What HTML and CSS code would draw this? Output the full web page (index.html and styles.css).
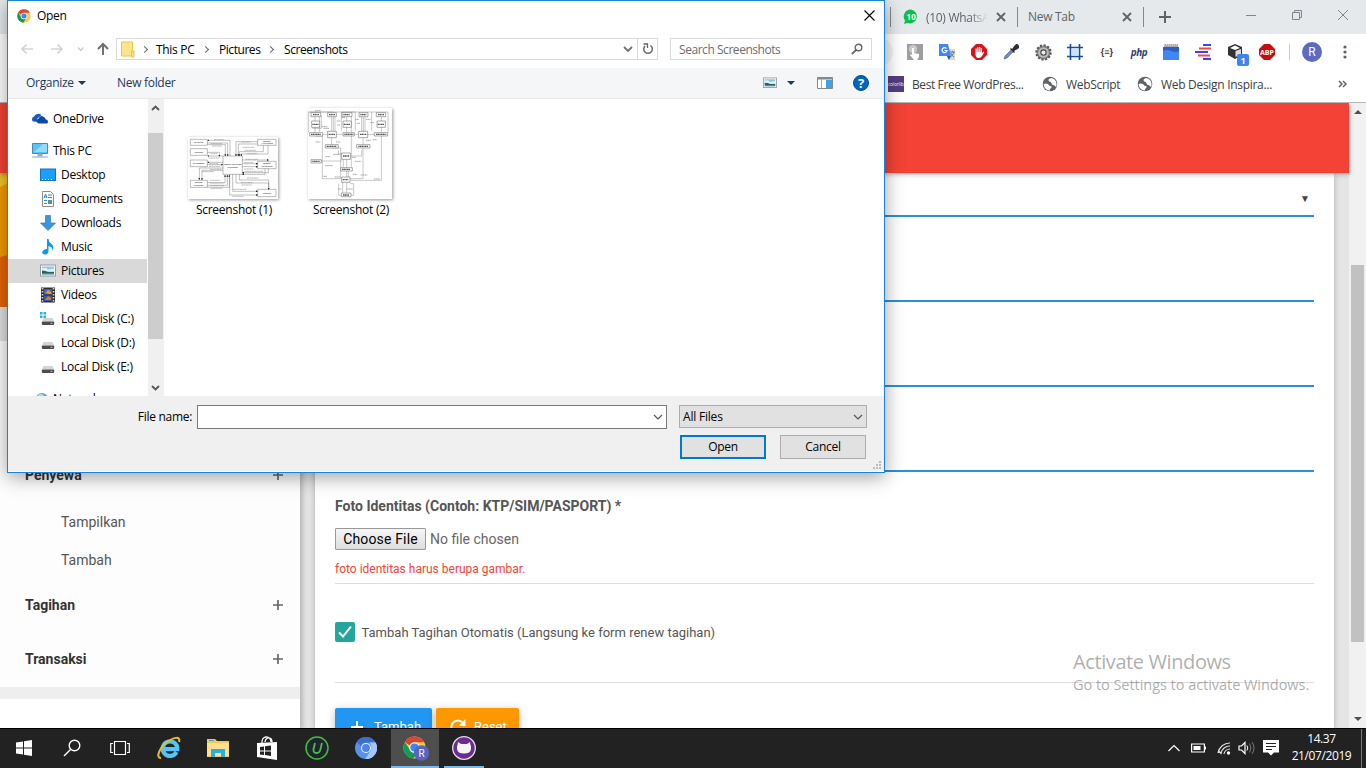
FILE: index.html
```html
<!DOCTYPE html>
<html lang="id">
<head>
<meta charset="utf-8">
<title>Tambah Penyewa</title>
<link rel="stylesheet" href="styles.css">
</head>
<body>
<svg class="defs" width="0" height="0">
  <symbol id="x" viewBox="0 0 10 10"><path d="M1 1l8 8M9 1l-8 8" stroke="currentColor" stroke-width="1.800" fill="none"/></symbol>
  <symbol id="plus" viewBox="0 0 12 12"><path d="M6 0v12M0 6h12" stroke="currentColor" stroke-width="2" fill="none"/></symbol>
  <symbol id="down" viewBox="0 0 10 10"><path d="M1 3l4 4 4-4" stroke="#555" stroke-width="1.200" fill="none"/></symbol>
  <symbol id="globe" viewBox="0 0 24 24"><circle cx="12" cy="12" r="11" fill="#5f6368"/><path d="M2.500 12q3-1.500 6 0c2 1 1.500 2.500 4 3s2.500 2 1 3-2 4-2 4C6 21 2.500 17 2.500 12zM14 3c-3 1-5 2-4 4s3 1 4 3 0 3 3 3.500 2 3 4.500 2.500C23 10 20 4 14 3z" fill="#fff"/></symbol>
  <symbol id="disk" viewBox="0 0 16 12"><path d="M3 3h10l2 4H1z" fill="#d2d4d6"/><rect x="1" y="7" width="14" height="4" rx="1" fill="#4a4c4e"/><rect x="11" y="8.500" width="2" height="1.500" fill="#5fe36a"/></symbol>
  <symbol id="photo" viewBox="0 0 16 13"><rect x=".5" y="1" width="15" height="11" fill="#fff" stroke="#9a9a9a"/><rect x="2" y="2.500" width="12" height="8" fill="#8cc5ee"/><path d="M2 4.500q4-2 6 1l6-1v3H2z" fill="#e4f1f7"/><path d="M2 6.500q4 0 6 1.500h6v1H2z" fill="#2e6350"/><path d="M2 9h12v1.500H2z" fill="#3e8ac2"/></symbol>
  <symbol id="chrome" viewBox="0 0 24 24"><circle cx="12" cy="12" r="11.500" fill="#ffcd40"/><path d="M2 6.200A11.500 11.500 0 0 1 22 6.500H12a5.500 5.500 0 0 0-5 3.500z" fill="#db4437"/><path d="M2 6.200A11.500 11.500 0 0 0 11 23.500l5-8.500a5 5 0 0 1-9-1z" fill="#0f9d58"/><circle cx="12" cy="12" r="5.500" fill="#f1f1f1"/><circle cx="12" cy="12" r="4.300" fill="#4285f4"/></symbol>
  <marker id="tip" viewBox="0 0 6 6" refX="4" refY="3" markerWidth="6" markerHeight="6" markerUnits="userSpaceOnUse" orient="auto"><path d="M0 0l6 3-6 3z" fill="#222"/></marker>
</svg>

<div class="desktop">
  <div class="browser">
    <div class="tabstrip">
      <i class="tabsep"></i>
      <svg class="wa" width="16" height="16" viewBox="0 0 16 16"><path d="M8 .5a7 7 0 1 1-3.500 13.500L1 15l1-3.500A7 7 0 0 1 8 .5z" fill="#0cbf4c"/><text x="8.200" y="10.800" text-anchor="middle" class="wa-n">10</text></svg>
      <span class="tab-title wa-title ui">(10) WhatsA</span>
      <svg class="tabx" width="10" height="10"><use href="#x"/></svg>
      <i class="tabsep"></i>
      <span class="tab-title nt-title ui">New Tab</span>
      <svg class="tabx" width="10" height="10"><use href="#x"/></svg>
      <i class="tabsep"></i>
      <svg class="newtab" width="12" height="12"><use href="#plus"/></svg>
      <div class="winbtns">
        <svg width="12" height="12"><path d="M1 6.500h10" stroke="#80868b"/></svg>
        <svg width="12" height="12" viewBox="0 0 12 12"><path d="M1.500 3.500h7v7h-7zM3.500 3.500v-2h7v7h-2" fill="none" stroke="#80868b"/></svg>
        <svg width="12" height="12" viewBox="0 0 12 12"><path d="M1 1l10 10M11 1L1 11" stroke="#80868b"/></svg>
      </div>
    </div>
    <div class="toolbar">
      <span class="omni-end"></span>
      <div class="exts">
        <span><svg width="16" height="16"><rect width="16" height="16" fill="#9e9e9e"/><circle cx="6" cy="5" r="4" fill="#c9c9c9"/><path d="M5 4h2v5l5 1v3l-2 3H7l-4-5 1-1 1 1z" fill="#fff"/></svg></span>
        <span><svg width="16" height="16"><path d="M6 5h10v11H9z" fill="#d5d9de"/><path d="M0 0h9l3 12H0z" fill="#4285f4"/><path d="M8 12h4l-2 4z" fill="#2a56c6"/><path d="M7.500 4.500a2.500 2.500 0 1 0 .5 2H5.500" stroke="#fff" stroke-width="1.200" fill="none"/><path d="M11 8h5M13.500 7v1M15 8q-1 4-4 5M12 9q1 3 3 4" stroke="#607d8b" fill="none"/></svg></span>
        <span><svg width="16" height="16"><path d="M5 0h6l5 5v6l-5 5H5l-5-5V5z" fill="#d9131b"/><path d="M4.500 8V4.500h1.200V8h.5V3.200h1.300V8H8V3h1.300v5h.5V4H11v5l1.500-1.500.8.800L11 12q-1 2-3.500 2T4.500 11z" fill="#fff"/></svg></span>
        <span><svg width="16" height="16"><path d="M1 15l1-3 6-6 2 2-6 6z" fill="#5c8de0" stroke="#777" stroke-width=".8"/><path d="M7 5l1-1 1 1 3-4q2-2 3.500 0t0 3.500L11 7l1 1-1 1z" fill="#2b2d38"/></svg></span>
        <span><svg width="17" height="17" viewBox="-8 -8 16 16"><circle r="6.700" fill="#999" stroke="#555" stroke-width="2" stroke-dasharray="2 1.500"/><circle r="5.500" fill="#bbb" stroke="#777"/><circle r="2.500" fill="#eee" stroke="#444"/></svg></span>
        <span><svg width="16" height="16"><path d="M3.500 0v16M12.500 0v16M0 3.500h16M0 12.500h16" stroke="#164c98" stroke-width="1.600"/><rect x="4.500" y="4.500" width="7" height="7" fill="#cde2f7"/></svg></span>
        <span class="json">{≡}</span>
        <span class="php">php</span>
        <span><svg width="16" height="16"><path d="M1 0h14v4H1z" fill="#aaa"/><path d="M1 1h14" stroke="#eee" stroke-dasharray="1 1"/><path d="M0 3h16v13H0z" fill="#4285f4"/><path d="M0 3h16v4q-4 2-8 0T0 7z" fill="#2860c4"/></svg></span>
        <span><svg width="16" height="16"><path d="M8 1h8M0 8h13M8 15h8" stroke="#3c43f5" stroke-width="2"/><path d="M4 4.500h12M3 11.500h12" stroke="#ff4545" stroke-width="2"/></svg></span>
        <span><svg class="cube" width="22" height="22" viewBox="0 0 22 22"><path d="M8 0l7 3v8l-7 4-7-4V3z" fill="#333"/><path d="M8 1.500L13 4 8 6 3 4z" fill="#fff"/><path d="M8.500 7L14 5v5l-5.500 3z" fill="#ddd"/><rect x="10" y="10" width="12" height="12" rx="2" fill="#3f84f2"/><text x="16" y="19.500" text-anchor="middle" class="badge-n">1</text></svg></span>
        <span><svg width="16" height="16"><path d="M5 0h6l5 5v6l-5 5H5l-5-5V5z" fill="#c70d0d"/><text x="8" y="10.800" text-anchor="middle" class="abp">ABP</text></svg></span>
      </div>
      <i class="extsep"></i>
      <span class="avatar">R</span>
      <svg class="dots" width="4" height="14"><circle cx="2" cy="2" r="1.600"/><circle cx="2" cy="7" r="1.600"/><circle cx="2" cy="12" r="1.600"/></svg>
    </div>
    <div class="bookmarks ui">
      <svg width="16" height="16"><rect width="16" height="16" fill="#563d82"/><text x="8" y="10" text-anchor="middle" class="clb">colorlib</text></svg>
      <span class="bm1">Best Free WordPres...</span>
      <svg width="16" height="16"><use href="#globe"/></svg>
      <span class="bm2">WebScript</span>
      <svg width="16" height="16"><use href="#globe"/></svg>
      <span class="bm3">Web Design Inspira...</span>
      <svg class="more" width="9" height="8"><path d="M1 1l3 3-3 3M5 1l3 3-3 3" fill="none" stroke="#5f6368" stroke-width="1.500"/></svg>
    </div>
    <div class="viewport">
      <div class="page">
        <div class="navbar"></div>
        <div class="columns">
          <aside class="sidebar">
            <svg class="cover" width="300" height="134"><rect width="300" height="134" fill="#e66500"/><path d="M0 20L300 -80V0L0 84z" fill="#f59b00"/><path d="M0 0h60L0 22z" fill="#f4c32c"/><path d="M0 14l8-4v48L0 75z" fill="#f59b00"/></svg>
            <div class="userbar"></div>
            <nav class="menu">
              <div class="head"><b>Penyewa</b><svg width="10" height="10"><use href="#plus"/></svg></div>
              <a class="sub">Tampilkan</a>
              <a class="sub">Tambah</a>
              <div class="head"><b>Tagihan</b><svg width="10" height="10"><use href="#plus"/></svg></div>
              <div class="head"><b>Transaksi</b><svg width="10" height="10"><use href="#plus"/></svg></div>
            </nav>
            <div class="legal"></div>
          </aside>
          <main class="card">
            <div class="field select"><span>▼</span></div>
            <div class="field"></div>
            <div class="field"></div>
            <div class="field"></div>
            <div class="upload">
              <b class="lbl">Foto Identitas (Contoh: KTP/SIM/PASPORT) *</b>
              <div class="file"><button>Choose File</button><span>No file chosen</span></div>
              <p class="err">foto identitas harus berupa gambar.</p>
            </div>
            <div class="check"><span class="box"><svg width="20" height="20"><path d="M4 10.500l4 4 8-10" fill="none" stroke="#fff" stroke-width="2"/></svg></span>Tambah Tagihan Otomatis (Langsung ke form renew tagihan)</div>
            <div class="actions">
              <span class="btn add"><svg width="12" height="12"><use href="#plus"/></svg>Tambah</span>
              <span class="btn reset"><svg width="16" height="16"><path d="M13 4A6.500 6.500 0 1 0 14.300 9" fill="none" stroke="#fff" stroke-width="2"/><path d="M15.500 0v7h-7z" fill="#fff"/></svg>Reset</span>
            </div>
          </main>
        </div>
      </div>
      <div class="vscroll"><i class="up"></i><i class="thumb"></i><i class="dn"></i></div>
    </div>
  </div>

  <div class="taskbar">
    <div class="apps">
      <span class="n"><svg width="16" height="16"><path d="M0 2.500l7-1V7.500H0zM8 1.300L16 0v7.500H8zM0 8.500h7v6l-7-1zM8 8.500h8V16l-8-1.300z" fill="#fff"/></svg></span>
      <span class="n"><svg width="18" height="18"><circle cx="11.500" cy="6.500" r="5.300" fill="none" stroke="#fff" stroke-width="1.400"/><path d="M7.500 10.500L1 17" stroke="#fff" stroke-width="1.500"/></svg></span>
      <span class="n"><svg width="20" height="16"><path d="M4.500 1.500h11v13h-11zM3 3.500H.7v9H3M17 3.500h2.300v9H17" fill="none" stroke="#fff" stroke-width="1.200"/></svg></span>
      <span><svg width="24" height="24" viewBox="0 0 24 24"><path d="M19.500 16A7.300 7.300 0 1 1 20.300 13.200H7" fill="none" stroke="#53c4f6" stroke-width="4.200"/><path d="M4 22C-2 22 3 11 10 6S24 0 22 6" fill="none" stroke="#f1bd1c" stroke-width="2"/></svg></span>
      <span><svg width="22" height="20"><path d="M0 1h8l2 2h12v16H0z" fill="#f2c65a"/><path d="M0 5h22v13H0z" fill="#fbe08e"/><path d="M4 11h14v8h-4v-4H8v4H4z" fill="#29aee6"/><path d="M2 2.500h5" stroke="#36a9d8"/></svg></span>
      <span><svg width="22" height="24"><path d="M6 8C5-1 14-1 15 6M9 6c1-6 7-5 7 0" fill="none" stroke="#fff" stroke-width="1.300"/><path d="M1 7l20-1v18L1 21z" fill="#fff"/><path d="M4 11l4-.5v4H4zM9 10.300l6-.8v5H9zM4 15.500h4V19l-4-.5zM9 15.500h6V20l-6-1z" fill="#222"/></svg></span>
      <span><svg width="24" height="24"><circle cx="12" cy="12" r="11" fill="#1f2430" stroke="#43bd39" stroke-width="1.500"/><path d="M10 7L8.500 13q-.5 4 3 4t4-4L17 7" fill="none" stroke="#4dc13f" stroke-width="1.800"/></svg></span>
      <span><svg width="22" height="22" viewBox="0 0 24 24"><circle cx="12" cy="12" r="12" fill="#5b8fee"/><path d="M2 5.500A12 12 0 0 1 22.500 6H12a6 6 0 0 0-5.500 4z" fill="#3d6dcb"/><path d="M22.500 6A12 12 0 0 1 11 24l6-9q2-5-1-9z" fill="#a5c6fb"/><circle cx="12" cy="12" r="5.500" fill="#e9f1fd"/><circle cx="12" cy="12" r="4.300" fill="#4c84e6"/></svg></span>
      <span class="active"><svg width="26" height="26" viewBox="0 0 26 26"><use href="#chrome" x="0" y="1" width="23" height="23"/><circle cx="18.500" cy="18" r="7.700" fill="#5765bd"/><text x="18.500" y="21.500" text-anchor="middle" class="r-n">R</text></svg></span>
      <span class="open"><svg width="24" height="24"><circle cx="12" cy="12" r="11.300" fill="#6c2b91" stroke="#e5dcec" stroke-width="1.300"/><path d="M6 6l3 2h6l3-2 .5 3q.8 1 .5 4-.5 4.500-7 4.500T5 13q-.3-3 .5-4z" fill="#f5f5f5"/></svg></span>
    </div>
    <div class="tray">
      <svg width="14" height="8"><path d="M1.500 7L7 1.500 12.500 7" fill="none" stroke="#fff" stroke-width="1.200"/></svg>
      <svg width="15" height="10"><path d="M.6 1h12.800v8H.6z" fill="none" stroke="#fff" stroke-width="1.200"/><path d="M2.500 3h7v4h-7zM13.500 3.500H15v3h-1.500z" fill="#fff"/></svg>
      <svg width="14" height="14"><path d="M1 12A12 12 0 0 1 13 2M4 12.500A9 9 0 0 1 13 5M7 13a6 6 0 0 1 6-5M1.500 9.500l3 3.500" fill="none" stroke="#ddd" stroke-width="1.200"/><circle cx="11.500" cy="12" r="1.700" fill="#fff"/></svg>
      <svg width="17" height="14"><path d="M1 5h2.500L7 1.500v11L3.500 9H1z" fill="none" stroke="#fff" stroke-width="1.200"/><path d="M9 4.500q1.500 2.500 0 5" fill="none" stroke="#fff"/><path d="M11.500 2.500q3 4.500 0 9M14 1q4 6 0 12" fill="none" stroke="#777"/></svg>
      <svg width="16" height="16"><path d="M0 0h16v12.500h-5L8 15.500l-3-3H0z" fill="#fff"/><path d="M3 3.500h10M3 6.500h10M3 9.500h6" stroke="#222"/></svg>
      <div class="clock ui"><span>14.37</span><span>21/07/2019</span></div>
      <i class="peek"></i>
    </div>
  </div>

  <div class="watermark"><span class="w1">Activate Windows</span><span class="w2">Go to Settings to activate Windows.</span></div>

  <section class="dialog ui">
    <header class="title"><svg width="14" height="14"><use href="#chrome"/></svg><span>Open</span><svg class="close" width="11" height="11"><path d="M.5.5l10 10M10.500.5l-10 10" stroke="#000" stroke-width="1.100"/></svg></header>
    <div class="nav">
      <svg class="arrows" width="97" height="16" fill="none"><path d="M14 8H3m4.500-4.500L3 8l4.500 4.500M32 8h11m-4.500-4.500L43 8l-4.500 4.500" stroke="#d4d4d4" stroke-width="1.700"/><path d="M59 6.500l2.700 3 2.700-3" stroke="#ccc" stroke-width="1.300"/><path d="M84 14V3m-5 5l5-5 5 5" stroke="#707070" stroke-width="2"/></svg>
      <div class="address">
        <svg width="14" height="17"><path d="M.5 1h11v14H.5z" fill="#ffe48f" stroke="#edc64e"/><path d="M10.500 10h2.500v6h-2.500z" fill="#fbe08b" stroke="#e8b938" stroke-width=".8"/></svg>
        <em></em><span class="c1">This PC</span><em></em><span class="c2">Pictures</span><em></em><span class="c3">Screenshots</span>
        <svg class="hist" width="10" height="10"><path d="M1 3l4 4 4-4" fill="none" stroke="#707070" stroke-width="1.800"/></svg>
        <b class="refresh"><svg width="12" height="12"><path d="M8.500 2.500A4.300 4.300 0 1 1 3 3" fill="none" stroke="#666" stroke-width="1.500"/><path d="M1.500 1h4v4" fill="none" stroke="#666" stroke-width="1.300"/></svg></b>
      </div>
      <div class="search"><span>Search Screenshots</span><svg width="12" height="12"><circle cx="7.500" cy="4.500" r="3.300" fill="none" stroke="#666" stroke-width="1.400"/><path d="M5 7L.8 11.200" stroke="#666" stroke-width="1.800"/></svg></div>
    </div>
    <div class="cmd">
      <span class="org">Organize</span><i class="tri"></i><span class="nf">New folder</span>
      <svg class="view" width="14" height="11.500"><use href="#photo"/></svg><i class="tri"></i>
      <svg class="pane" width="16" height="12"><path d="M.5.500h15v11H.5z" fill="#fff" stroke="#888"/><path d="M.5 1.500h15" stroke="#888" stroke-width="2"/><path d="M4.500 2v9" stroke="#aaa"/><path d="M9 3h6v8H9z" fill="#3da3e8"/></svg>
      <svg width="16" height="16"><circle cx="8" cy="8" r="7.500" fill="#0067c0" stroke="#0b4c8b"/><text x="8" y="12.500" text-anchor="middle" class="q">?</text></svg>
    </div>
    <div class="body">
      <div class="tree">
        <div class="row top"><svg width="16" height="11"><path d="M1 8.500a3 3 0 0 1 1-5Q5-1 9.500 2L6 5q-2 2 0 4z" fill="#1a5bbf"/><path d="M6.500 10.500a2.500 2.500 0 0 1 0-4.800q1-3.500 4-2.500t3 3q2.500.3 2.500 2.500t-2 1.800z" fill="#0d47a8"/></svg>OneDrive</div>
        <div class="row top pc"><svg width="16" height="15"><path d="M.5.500h15v10H.5z" fill="#5ac2fb" stroke="#458bb5"/><path d="M2 9L11 1h4v8z" fill="#92dcff"/><path d="M6 11h4v2H6zM0 14h16" fill="#b1c4d2" stroke="#8ba4b7"/></svg>This PC</div>
        <div class="row"><svg width="16" height="13"><rect x=".5" y="1" width="15" height="11.500" fill="#1a9fff" stroke="#1274bd"/><path d="M2 11.500h12" stroke="#fff" stroke-dasharray="1 2"/></svg>Desktop</div>
        <div class="row"><svg width="16" height="16"><path d="M2.500.5h8l3 3v12h-11z" fill="#fff" stroke="#8a8a8a"/><path d="M8 4h4M8 6.500h4M4 9.500h3M4 12.500h3" stroke="#2b8cd0"/><path d="M4 7l1.500-4L7 7M4.500 6h2" stroke="#158ddd" fill="none"/><path d="M8 9h4v4H8z" fill="#5a90a2"/></svg>Documents</div>
        <div class="row"><svg width="16" height="16"><path d="M5.500.5h5V8h5L8 15.500.5 8h5z" fill="#3b94dd" stroke="#2b7fc3" stroke-width=".7"/></svg>Downloads</div>
        <div class="row"><svg width="16" height="16"><path d="M7 0h1.500q0 3 3 5t1 7q.5-4-4-5v6q-1 3-4 2.500t-2-3T7 10z" fill="#0b99eb"/></svg>Music</div>
        <div class="row sel"><svg width="16" height="13"><use href="#photo"/></svg>Pictures</div>
        <div class="row"><svg width="16" height="16"><rect x="1" y=".5" width="14" height="15" fill="#303030"/><path d="M2.500 1v15M13.500 1v15" stroke="#ddd" stroke-width="1.500" stroke-dasharray="1.500 1.500"/><path d="M4 2h8v5.500H4z" fill="#3e65c5"/><path d="M4 8.500h8V14H4z" fill="#3458a8"/><path d="M5 6l3-3 2 1 2 3H9z" fill="#e19b33"/><path d="M5 13l3-4 3 2v2z" fill="#d5782e"/></svg>Videos</div>
        <div class="row"><svg width="16" height="14"><path d="M0 0h2.500v2.500H0zM3.500 0H6v2.500H3.500zM0 3.500h2.500V6H0zM3.500 3.500H6V6H3.500z" fill="#18b5ef"/><use href="#disk" x="1" y="3" width="14" height="11"/></svg>Local Disk (C:)</div>
        <div class="row"><svg width="16" height="14"><use href="#disk" x="1" y="3" width="14" height="11"/></svg>Local Disk (D:)</div>
        <div class="row"><svg width="16" height="14"><use href="#disk" x="1" y="3" width="14" height="11"/></svg>Local Disk (E:)</div>
        <div class="row top net"><svg width="16" height="16"><circle cx="10" cy="8" r="6" fill="#62a5cf"/><circle cx="9" cy="6" r="3" fill="#b5dced"/></svg>Network</div>
      </div>
      <div class="tscroll"><svg width="9" height="6"><path d="M1 5l3.500-3.500L8 5" fill="none" stroke="#555" stroke-width="1.800"/></svg><i></i><svg class="b" width="9" height="6"><path d="M1 1l3.500 3.500L8 1" fill="none" stroke="#555" stroke-width="1.800"/></svg></div>
      <div class="files">
        <figure class="f1">
          <svg class="thumb-img" width="90" height="62" viewBox="24 111 270 186">
            <g fill="#fff" stroke="#777" stroke-width="1.500"><path d="M31 118h51v18H31zM31 146h51v20H31zM31 180h51v20H31zM31 241h51v21H31zM233 118h55v18h-55zM233 184h55v22h-55zM233 268h55v22h-55zM129 168h58v55h-58z"/></g>
            <g fill="none" stroke="#444" stroke-width="1" marker-end="url(#tip)"><path d="M150 168v-47H84"/><path d="M82 129h61v38"/><path d="M82 134h54v33"/><path d="M129 168H84"/><path d="M82 157h36v11"/><path d="M129 187H84"/><path d="M82 194h46"/><path d="M129 204H58v34"/><path d="M129 211H66v28"/><path d="M82 248h53v-22"/><path d="M82 256h60v-30"/><path d="M82 262h66v-36"/><path d="M233 125h-65v42"/><path d="M233 132h-58v35"/><path d="M264 136v26h-80v5"/><path d="M250 136v19h-72v12"/><path d="M187 180h78"/><path d="M187 191h45"/><path d="M187 200h45"/><path d="M265 206v12h-77"/><path d="M255 206v17h-67"/><path d="M178 223v17h88v27"/><path d="M168 223v26h98v18"/><path d="M158 223v51h74"/><path d="M149 223v62h83"/></g>
            <path d="M102 119h31M92 131h35M96 138h30M92 161h20M86 174h32M87 191h28M87 199h35M90 208h34M65 215h37M91 241h30M91 249h39M91 257h42M92 265h36M184 126h28M188 142h35M193 151h35M202 161h30M197 178h38M192 188h28M193 207h28M194 214h55M201 234h35M183 248h35M184 255h31M159 268h40M157 289h35" stroke="#999" stroke-width="2" stroke-dasharray="6 1"/>
            <g class="tiny"><text x="56" y="130">Personal</text><text x="56" y="159">Gudang</text><text x="56" y="193">Pelanggan</text><text x="56" y="249">Bagian</text><text x="56" y="257">Produksi</text><text x="261" y="125">Bagian</text><text x="261" y="133">Accounting</text><text x="261" y="193">Bagian</text><text x="261" y="201">Pembelian</text><text x="261" y="281">Manajer</text><text x="158" y="195">Sistem Informasi</text><text x="158" y="205">Penjualan</text></g>
          </svg>
          <figcaption>Screenshot (1)</figcaption>
        </figure>
        <figure class="f2">
          <svg class="thumb-img" width="84" height="91" viewBox="384 26 252 273">
            <g fill="none" stroke="#777" stroke-width="1.200"><path d="M386 38h75M386 38v62M386 38h238v62M424 47v40h-27M484 94V38h42v56M575 94V38M405 53v48M418 48v50M455 53v43M460 53v43M465 53v43M500 53v48M514 40v60M545 53v43M550 53v43M555 53v43M604 53v48M428 105h15M468 105h20M523 105h13M563 105h20M406 110h21v128h57M455 114v22M549 114v22M604 110v133h-93M460 146h22v92M549 146v92h-39M475 152v12h13M510 170h35v-18M424 185h61M490 180v24M500 180v55M514 106v97M505 215v18M476 253v35h12M488 249v31M500 249v31M510 253h11v35h-11"/></g>
            <g fill="#fff" stroke="#555" stroke-width="1.500"><path d="M393 40h29v12h-29zM443 40h26v12h-26zM486 40h30v12h-30zM537 40h27v12h-27zM589 40h28v12h-28zM395 65h24v19h-24zM489 65h25v19h-25zM591 65h25v19h-25zM389 100h39v10h-39zM443 96h26v19h-26zM489 100h34v10h-34zM536 96h27v19h-27zM583 100h40v10h-40zM436 136h39v10h-39zM530 136h40v10h-40zM485 161h26v19h-26zM393 181h31v10h-31zM482 205h35v10h-35zM485 233h25v16h-25zM484 281h29v11h-29z"/></g>
            <path d="M399 46h18M447 46h18M490 46h20M541 46h18M594 46h18M397 75h20M491 75h20M593 75h20M393 105h30M446 105h19M493 105h27M540 105h19M588 105h31M440 141h30M535 141h30M489 170h18M397 186h22M486 210h25M488 241h17M489 287h18" stroke="#555" stroke-width="4" stroke-dasharray="4 1"/>
            <path d="M405 34h17M430 87h17M425 82h18M470 65h12M471 77h9M525 60h11M530 72h10M558 60h14M571 70h12M484 55h12M407 128h14M436 172h15M460 165h20M435 199h24M468 128h13M558 123h14M578 121h13M516 174h12M524 186h20M430 231h12M542 227h20M582 239h17M464 233h18M518 225h14M473 269h11M501 269h18" stroke="#aaa" stroke-width="3" stroke-dasharray="5 1"/>
          </svg>
          <figcaption>Screenshot (2)</figcaption>
        </figure>
      </div>
    </div>
    <footer class="foot">
      <div class="line"><label>File name:</label><span class="combo name"><svg width="10" height="10"><use href="#down"/></svg></span><span class="combo type">All Files<svg width="10" height="10"><use href="#down"/></svg></span></div>
      <div class="line btns"><span class="dbtn prim">Open</span><span class="dbtn">Cancel</span></div>
      <svg class="grip" width="8" height="8" fill="#bbb"><path d="M6 0h2v2H6zM6 3h2v2H6zM3 3h2v2H3zM6 6h2v2H6zM3 6h2v2H3zM0 6h2v2H0z"/></svg>
    </footer>
  </section>
</div>
</body>
</html>
```
FILE: styles.css
```css
* { box-sizing: border-box; }
body { margin: 0; font-family: Roboto, "Liberation Sans", sans-serif; }
svg { display: block; flex: none; }
i, em, b { font-style: normal; flex: none; }
.defs { position: absolute; }
.desktop { position: relative; width: 1366px; height: 768px; overflow: hidden; display: flex; flex-direction: column; background: #fff; }
.ui { font-family: "Open Sans", "Noto Sans", sans-serif; font-size: 12px; letter-spacing: -0.3px; white-space: nowrap; }

/* browser chrome */
.browser { height: 728px; display: flex; flex-direction: column; }
.tabstrip { height: 34px; flex: none; background: #e5e9ec; display: flex; align-items: center; padding-left: 890px; color: #5f6368; }
.tabsep { width: 1px; height: 20px; background: #85898d; }
.wa { margin-left: 12px; }
.wa-n { font: bold 8px "Open Sans", sans-serif; fill: #fff; letter-spacing: 0; }
.wa-title { width: 62px; margin-left: 7px; overflow: hidden; -webkit-mask-image: linear-gradient(90deg, #000 70%, transparent); mask-image: linear-gradient(90deg, #000 70%, transparent); }
.tabx { margin-left: 8px; margin-right: 11px; }
.nt-title { width: 86px; margin-left: 10px; margin-right: 0; margin-top: -1px; }
.newtab { margin-left: 15px; }
.winbtns { display: flex; gap: 34px; margin: -5px 0 0 74px; }
.toolbar { height: 34px; flex: none; display: flex; align-items: center; padding: 2px 0 0 865px; }
.omni-end { width: 28px; height: 28px; border-radius: 14px; background: #f1f3f4; }
.exts { display: flex; margin-left: 6px; }
.exts span { width: 32px; height: 18px; display: flex; align-items: center; justify-content: center; }
.cube { margin: 6px 0 0 6px; }
.badge-n { font: bold 9px "Open Sans", sans-serif; fill: #fff; }
.abp { font: bold 7px "Open Sans", sans-serif; fill: #fff; }
.json { font: bold 9px "Liberation Sans", sans-serif; color: #333; }
.php { font: italic bold 10px "Open Sans", sans-serif; letter-spacing: -.5px; color: #33426e; }
.extsep { width: 1px; height: 16px; background: #c8cace; margin-left: 6px; }
.avatar { width: 20px; height: 20px; border-radius: 50%; background: #5c6bc0; color: #fff; font-size: 12px; line-height: 20px; text-align: center; margin-left: 12px; }
.dots { margin-left: 21px; fill: #5f6368; }
.bookmarks { height: 35px; flex: none; border-bottom: 1px solid #b4b6b8; display: flex; align-items: center; padding: 0 0 2px 888px; color: #3c4043; }
.clb { font: 4.500px "Open Sans", sans-serif; fill: #fff; letter-spacing: 0; }
.bm1 { width: 138px; padding-left: 8px; letter-spacing: -.4px; }
.bm2 { width: 79px; padding-left: 8px; }
.bm3 { width: 185px; padding-left: 8px; }

/* page */
.viewport { flex: 1; min-height: 0; display: flex; overflow: hidden; }
.page { width: 1349px; display: flex; flex-direction: column; background: #e5e5e5; }
.navbar { height: 70px; flex: none; background: #f44336; box-shadow: 0 1px 5px rgba(0,0,0,.35); z-index: 1; }
.columns { display: flex; gap: 15px; flex: 1; min-height: 0; }
.sidebar { width: 300px; background: #fff; box-shadow: 2px 2px 6px rgba(0,0,0,.25); display: flex; flex-direction: column; }
.userbar { height: 34px; background: #e0e0e0; }
.menu { padding-top: 107px; background: #fdfdfd; color: #333; font-size: 14px; }
.head { height: 54px; display: flex; align-items: center; justify-content: space-between; padding: 0 17px 0 25px; }
.head b { font-weight: 700; }
.head svg { color: #666; margin-right: .5px; }
.head:first-child { height: 55px; padding-bottom: 2px; }
.sub { display: block; height: 37.500px; line-height: 38px; padding-left: 61px; color: #555; }
.legal { height: 12px; background: #eee; }
.menu { height: 346px; }
.card { width: 1019px; background: #fff; padding: 0 20px; box-shadow: 0 2px 6px rgba(0,0,0,.25); color: #555; }
.field { height: 85px; border-bottom: 2px solid #2b8fdf; }
.select { height: 44px; display: flex; justify-content: flex-end; align-items: center; padding: 8px 4px 0 0; font-size: 10px; color: #444; }
.upload { height: 112px; border-bottom: 1px solid #ddd; padding-top: 25px; }
.lbl { display: block; font-size: 14px; line-height: 18px; }
.file { display: flex; gap: 4px; align-items: center; margin-top: 13px; font-size: 14px; color: #666; }
.file button { width: 91px; height: 22px; padding: 0; border: 1px solid #999; border-radius: 1px; background: linear-gradient(#f6f6f6, #dedede); font: 14px Roboto, sans-serif; letter-spacing: .15px; color: #000; }
.err { margin: 10px 0 0; font-size: 12px; line-height: 18px; color: #f44336; }
.check { height: 99px; border-bottom: 1px solid #ddd; display: flex; gap: 6.500px; align-items: center; padding-bottom: 2px; font-size: 13px; color: #555; }
.box { width: 20px; height: 20px; border-radius: 2px; background: #26a69a; }
.actions { display: flex; gap: 4px; padding-top: 25px; }
.btn { height: 37px; border-radius: 2px; display: flex; align-items: center; color: #fff; font-size: 13px; box-shadow: 0 2px 8px rgba(0,0,0,.25); }
.add { width: 97px; background: #2196f3; padding-left: 16px; gap: 11px; }
.reset { width: 83px; background: #ff9800; padding-left: 14px; gap: 8px; }
.vscroll { width: 17px; background: #f1f1f1; display: flex; flex-direction: column; align-items: center; }
.vscroll .up { border: 4px solid transparent; border-top: 0; border-bottom: 4px solid #505050; margin-top: 7px; }
.vscroll .dn { border: 4px solid transparent; border-bottom: 0; border-top: 4px solid #505050; margin-top: 75px; }
.thumb { width: 13px; height: 377px; background: #c1c1c1; margin-top: 151px; }

/* taskbar */
.taskbar { height: 40px; background: #222; border-top: 1px solid #000; display: flex; justify-content: space-between; }
.apps { display: flex; }
.apps span { width: 49.200px; display: flex; align-items: center; justify-content: center; padding-left: 1px; padding-bottom: 2px; }
.apps .n { width: 48px; padding-left: 0; }
.apps .active { width: 48px; margin: 0 .6px; background: #4e4e4e; border-bottom: 2px solid #76b9ed; padding: 0 0 0 2px; }
.apps .open { width: 40px; margin-left: 4.500px; border-bottom: 2px solid #76b9ed; padding: 0; }
.r-n { font: 10px Roboto, sans-serif; fill: #fff; }
.tray { display: flex; align-items: center; padding-bottom: 1px; }
.tray svg { margin-right: 10px; }
.tray svg:nth-child(2) { margin-right: 11px; }
.tray svg:nth-child(3) { margin-right: 7px; }
.tray svg:nth-child(4) { margin-right: 8px; }
.clock { width: 70px; margin-left: -3px; margin-right: 5px; display: flex; flex-direction: column; align-items: center; line-height: 17px; color: #fff; margin-top: -3px; }
.clock span { margin-left: 1px; letter-spacing: -.4px; }
.peek { width: 1px; height: 39px; background: #777; margin-right: 4px; }
.watermark { position: absolute; left: 1073px; top: 649px; display: flex; flex-direction: column; font-family: "Open Sans", sans-serif; color: rgba(120,120,120,.6); white-space: nowrap; }
.w1 { font-size: 20px; line-height: 25px; letter-spacing: -.4px; }
.w2 { font-size: 14.500px; line-height: 21px; letter-spacing: -.04px; }

/* file dialog */
.dialog { position: absolute; z-index: 5; left: 7px; top: 0; width: 878px; height: 473px; border: 1px solid #1883d7; background: #fff; display: flex; flex-direction: column; box-shadow: 0 4px 18px rgba(0,0,0,.38); color: #000; }
.title { height: 30px; display: flex; align-items: center; padding: 0 9px 1px; gap: 6px; }
.close { margin-left: auto; }
.nav { height: 37px; display: flex; align-items: center; padding: 0 12px 1px 11px; }
.address { width: 542px; height: 22px; border: 1px solid #d9d9d9; display: flex; align-items: center; padding-left: 4px; margin-right: 12px; }
.address em { width: 5px; height: 5px; border: solid #666; border-width: 1.500px 1.500px 0 0; transform: rotate(45deg); margin: 0 11px 0 6px; }
.address svg + em { margin-left: 7px; margin-right: 9px; }
.c1 { width: 41px; } .c2 { width: 43px; } .c3 { width: 64px; }
.c2, .c3 { letter-spacing: -.45px; }
.hist { margin-left: auto; margin-right: 4px; }
.refresh { width: 20px; height: 20px; border-left: 1px solid #d9d9d9; display: flex; align-items: center; justify-content: center; }
.search { width: 202px; height: 22px; border: 1px solid #d9d9d9; display: flex; align-items: center; justify-content: space-between; padding: 0 8px 0 8px; color: #6d6d6d; letter-spacing: -.45px; }
.cmd { height: 31px; background: #f5f6f7; border-bottom: 1px solid #e6e8ea; display: flex; align-items: center; padding: 0 15px 1px 18px; color: #1e395b; }
.org { width: 47px; }
.tri { border: 4px solid transparent; border-top: 4px solid #1e395b; border-bottom: 0; margin-left: 5px; }
.nf { margin-left: 31px; }
.view { margin-left: auto; }
.view + .tri { margin-left: 10px; }
.pane { margin: 0 20px 0 22px; }
.q { font: bold 13px "Open Sans", sans-serif; fill: #fff; letter-spacing: 0; }
.body { height: 297px; display: flex; overflow: hidden; }
.tree { width: 139px; padding-top: 8px; overflow: hidden; }
.row { height: 24px; display: flex; align-items: center; gap: 5px; padding-left: 32px; padding-bottom: 1px; letter-spacing: -.27px; }
.top { padding-left: 24px; }
.pc { margin-top: 8px; }
.net { margin-top: 8px; }
.sel { background: #d9d9d9; }
.tscroll { width: 16px; margin-left: 1px; background: #f0f0f0; display: flex; flex-direction: column; align-items: center; padding: 6px 1px 0 0; }
.tscroll i { width: 15px; height: 206px; margin-top: 22px; background: #cdcdcd; align-self: flex-start; }
.tscroll .b { margin-top: 46px; }
.files { display: flex; align-items: flex-end; height: 121px; margin-left: 2px; }
figure { margin: 0; display: flex; flex-direction: column; align-items: center; }
.thumb-img { background: #fff; box-shadow: 1px 1px 3px rgba(0,0,0,.4); }
figcaption { height: 21px; line-height: 22px; letter-spacing: -.25px; padding-left: 2px; }
.f1 { width: 90px; margin-left: 22px; } .f2 { width: 84px; margin-left: 30px; }
.tiny { font: 7.500px "Liberation Sans", sans-serif; text-anchor: middle; letter-spacing: -.2px; fill: #222; }
.foot { height: 75px; background: #f0f0f0; position: relative; padding-top: 9px; }
.line { display: flex; align-items: center; }
.line label { width: 189px; padding-right: 5px; padding-bottom: 1px; text-align: right; }
.combo { display: flex; align-items: center; justify-content: space-between; }
.name { width: 470px; height: 24px; background: #fff; border: 1px solid #7a7a7a; justify-content: flex-end; padding-right: 3px; margin-right: 12px; }
.type { width: 188px; height: 23px; background: #e1e1e1; border: 1px solid #adadad; padding: 0 3px; margin-top: -1px; letter-spacing: -.2px; }
.btns { gap: 14px; padding: 6px 0 0 672px; }
.dbtn { width: 86px; height: 24px; border: 1px solid #adadad; background: #e1e1e1; line-height: 22px; text-align: center; }
.prim { border: 2px solid #0078d7; line-height: 20px; }
.grip { position: absolute; right: 3px; bottom: 2px; }
```
